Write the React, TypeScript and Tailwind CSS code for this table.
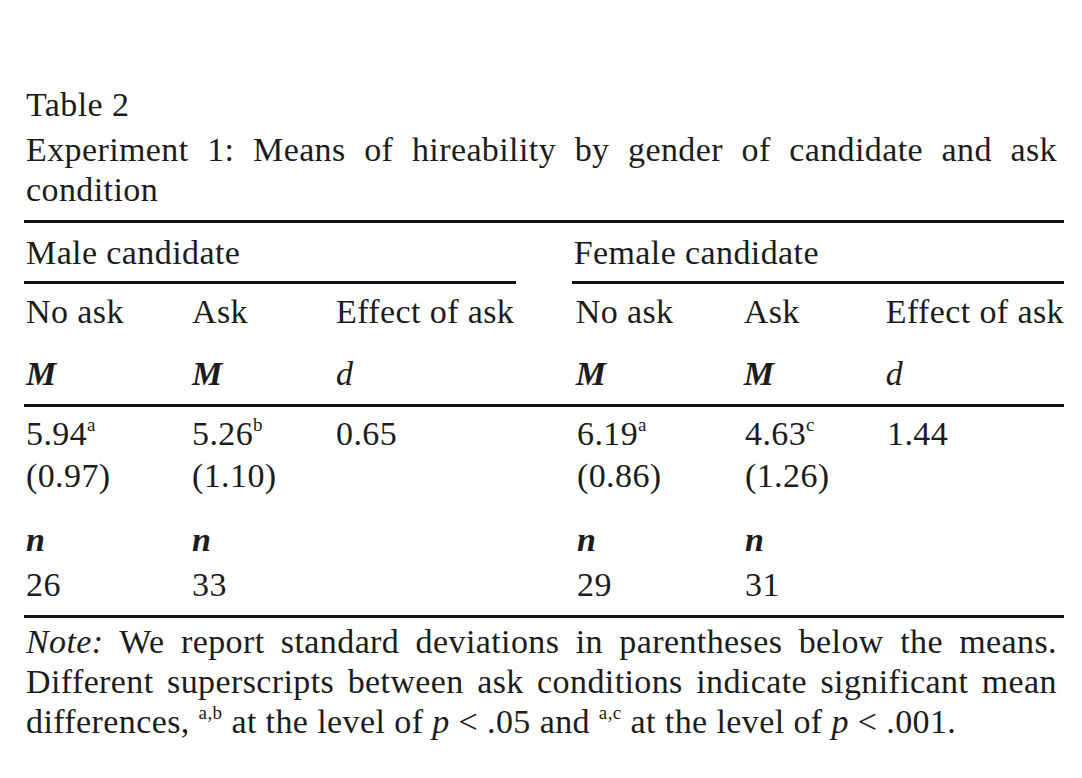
import React from "react";

function HeadHalf({ title, box, grid }: { title: string; box: string; grid: string }) {
  return (
    <div className={box}>
      <div className="pt-[10px] leading-[40px] pl-[2px] whitespace-nowrap">{title}</div>
      <div className="mt-[8px] border-t-[3px] border-[#111]" />
      <div className={grid + " pt-[8px] leading-[40px] whitespace-nowrap"}>
        <span>No ask</span>
        <span>Ask</span>
        <span>Effect of ask</span>
      </div>
      <div className={grid + " mt-[22px] leading-[40px] whitespace-nowrap"}>
        <span className="italic font-bold">M</span>
        <span className="italic font-bold">M</span>
        <span className="italic">d</span>
      </div>
    </div>
  );
}

function DataHalf({
  box,
  grid,
  m1,
  s1,
  m2,
  s2,
  d,
  sd1,
  sd2,
  n1,
  n2,
}: {
  box: string;
  grid: string;
  m1: string;
  s1: string;
  m2: string;
  s2: string;
  d: string;
  sd1: string;
  sd2: string;
  n1: string;
  n2: string;
}) {
  return (
    <div className={box}>
      <div className={grid + " pt-[7px] leading-[40px] whitespace-nowrap"}>
        <span>
          {m1}
          <sup className="text-[19px] top-[-0.75em]">{s1}</sup>
        </span>
        <span>
          {m2}
          <sup className="text-[19px] top-[-0.75em]">{s2}</sup>
        </span>
        <span>{d}</span>
      </div>
      <div className={grid + " leading-[44px] whitespace-nowrap"}>
        <span>{sd1}</span>
        <span>{sd2}</span>
        <span />
      </div>
      <div className={grid + " mt-[22px] leading-[40px] whitespace-nowrap"}>
        <span className="italic font-bold">n</span>
        <span className="italic font-bold">n</span>
        <span />
      </div>
      <div className={grid + " mt-[5px] leading-[40px] whitespace-nowrap"}>
        <span>{n1}</span>
        <span>{n2}</span>
        <span />
      </div>
    </div>
  );
}

export default function App() {
  const leftBox = "w-[493px]";
  const rightBox = "ml-[56px] flex-1";
  const leftGrid = "grid grid-cols-[166px_144px_1fr] pl-[2px]";
  const rightGrid = "grid grid-cols-[168px_142px_1fr] pl-[4px]";
  return (
    <div className="w-[1082px] h-[778px] overflow-hidden bg-white text-[#1c1c1c] font-['Liberation_Serif',serif] text-[34px] tracking-[0.4px]">
      <div className="pt-[80px]">
        <div className="ml-[26px] w-[1031px]">
          <div className="leading-[50px]">Table 2</div>
          <div className="leading-[40px] text-justify [text-align-last:justify]">
            Experiment 1: Means of hireability by gender of candidate and ask
          </div>
          <div className="leading-[40px]">condition</div>
        </div>

        <div className="ml-[24px] w-[1040px]">
          <div className="mt-[10px] border-t-[3px] border-[#111]" />
          <div className="flex">
            <HeadHalf title="Male candidate" box={leftBox} grid={leftGrid} />
            <HeadHalf title="Female candidate" box={rightBox} grid={rightGrid} />
          </div>
          <div className="mt-[10px] border-t-[3px] border-[#111]" />
          <div className="flex">
            <DataHalf
              box={leftBox}
              grid={leftGrid}
              m1="5.94"
              s1="a"
              m2="5.26"
              s2="b"
              d="0.65"
              sd1="(0.97)"
              sd2="(1.10)"
              n1="26"
              n2="33"
            />
            <DataHalf
              box={rightBox}
              grid={rightGrid}
              m1="6.19"
              s1="a"
              m2="4.63"
              s2="c"
              d="1.44"
              sd1="(0.86)"
              sd2="(1.26)"
              n1="29"
              n2="31"
            />
          </div>
          <div className="mt-[10px] border-t-[3px] border-[#111]" />
        </div>

        <div className="ml-[26px] w-[1031px] pt-[4px]">
          <div className="leading-[40px] text-justify [text-align-last:justify]">
            <span className="italic">Note:</span> We report standard deviations in parentheses below the means.
          </div>
          <div className="leading-[40px] text-justify [text-align-last:justify]">
            Different superscripts between ask conditions indicate significant mean
          </div>
          <div className="leading-[40px] whitespace-nowrap">
            differences, <sup className="text-[19px] top-[-0.75em]">a,b</sup> at the level of{" "}
            <span className="italic">p</span> &lt; .05 and{" "}
            <sup className="text-[19px] top-[-0.75em]">a,c</sup> at the level of{" "}
            <span className="italic">p</span> &lt; .001.
          </div>
        </div>
      </div>
    </div>
  );
}
